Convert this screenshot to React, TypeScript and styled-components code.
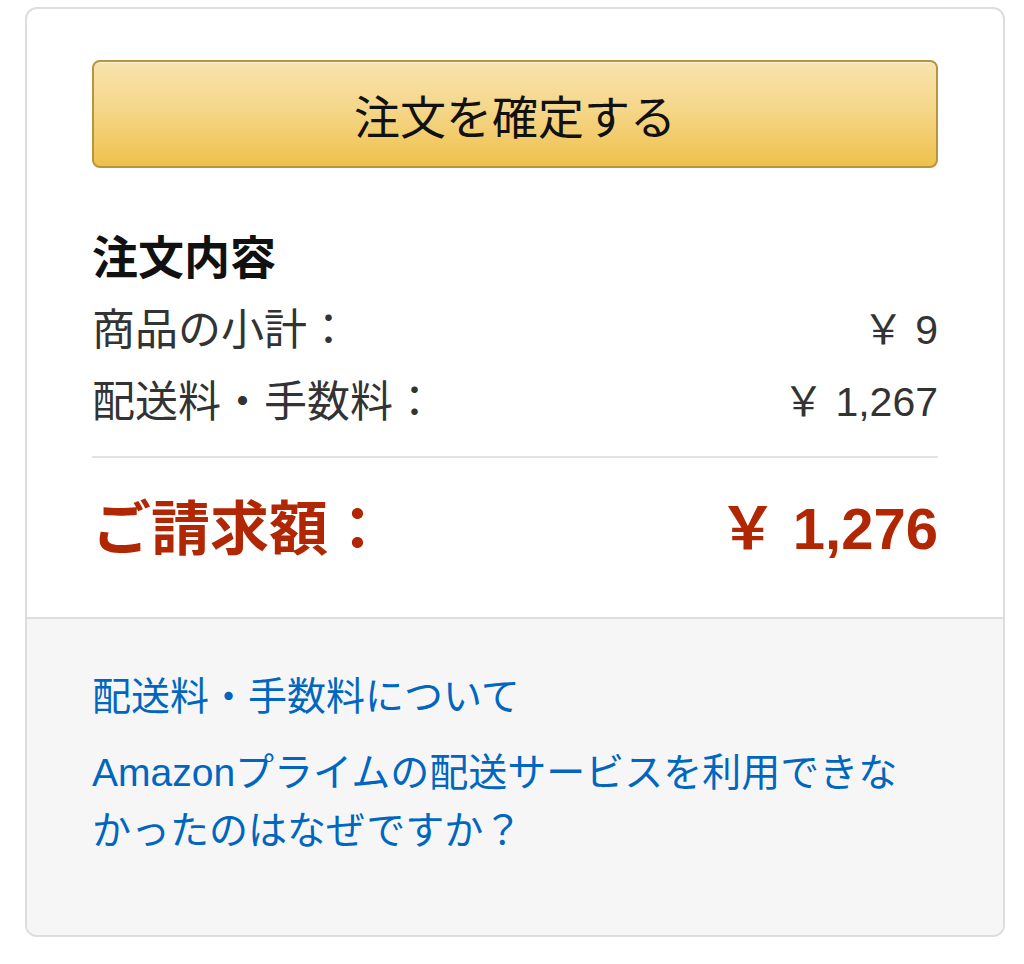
import React from "react";
import styled, { createGlobalStyle } from "styled-components";

const Global = createGlobalStyle`
  html, body { margin: 0; padding: 0; background: #ffffff; }
  body { font-family: "Liberation Sans", "Noto Sans CJK JP", sans-serif; }
`;

const Page = styled.div`
  padding: 7px 19px 0 25px;
`;

const Card = styled.div`
  width: 976px;
  border: 2px solid #dddddd;
  border-radius: 12px;
  overflow: hidden;
  background: #ffffff;
`;

const Summary = styled.div`
  padding: 51px 65px 53px 65px;
  display: flex;
  flex-direction: column;
`;

const PlaceOrder = styled.button`
  box-sizing: border-box;
  width: 100%;
  height: 108px;
  border: 2px solid #b7953f;
  border-radius: 8px;
  background: linear-gradient(to bottom, #f8e3ae 0%, #f5d78a 45%, #efc04c 100%);
  box-shadow: inset 0 1px 0 rgba(255, 255, 255, 0.5);
  font-family: "Noto Sans CJK JP", sans-serif;
  font-size: 46px;
  color: #111111;
  padding: 0;
  cursor: pointer;
`;

const Heading = styled.h2`
  margin: 56px 0 6px 0;
  font-family: "Noto Sans CJK JP", sans-serif;
  font-size: 46px;
  line-height: 60px;
  font-weight: 700;
  color: #111111;
`;

const Row = styled.div`
  display: flex;
  justify-content: space-between;
  align-items: center;
  height: 72px;
  color: #333333;
`;

const RowLabel = styled.span`
  font-family: "Noto Sans CJK JP", sans-serif;
  font-size: 43px;
`;

const RowValue = styled.span`
  font-family: "Liberation Sans", "Noto Sans CJK JP", sans-serif;
  font-size: 41px;
`;

const Divider = styled.hr`
  margin: 22px 0 0 0;
  border: none;
  height: 2px;
  background: #e3e3e3;
`;

const TotalRow = styled.div`
  display: flex;
  justify-content: space-between;
  align-items: center;
  height: 80px;
  margin-top: 26px;
  color: #b12704;
  font-weight: 700;
`;

const TotalLabel = styled.span`
  font-family: "Noto Sans CJK JP", sans-serif;
  font-size: 59px;
`;

const TotalValue = styled.span`
  font-family: "Liberation Sans", "Noto Sans CJK JP", sans-serif;
  font-size: 58px;
`;

const Footer = styled.div`
  border-top: 2px solid #dddddd;
  background: #f6f6f6;
  padding: 49px 80px 75px 65px;
  display: flex;
  flex-direction: column;
  gap: 18px;
`;

const HelpLink = styled.a`
  font-family: "Liberation Sans", "Noto Sans CJK JP", sans-serif;
  font-size: 39px;
  line-height: 58px;
  color: #0066c0;
  text-decoration: none;
`;

export default function App() {
  return (
    <>
      <Global />
      <Page>
        <Card>
          <Summary>
            <PlaceOrder>注文を確定する</PlaceOrder>
            <Heading>注文内容</Heading>
            <Row>
              <RowLabel>商品の小計：</RowLabel>
              <RowValue>￥ 9</RowValue>
            </Row>
            <Row>
              <RowLabel>配送料・手数料：</RowLabel>
              <RowValue>￥ 1,267</RowValue>
            </Row>
            <Divider />
            <TotalRow>
              <TotalLabel>ご請求額：</TotalLabel>
              <TotalValue>￥ 1,276</TotalValue>
            </TotalRow>
          </Summary>
          <Footer>
            <HelpLink href="#">配送料・手数料について</HelpLink>
            <HelpLink href="#">Amazonプライムの配送サービスを利用できなかったのはなぜですか？</HelpLink>
          </Footer>
        </Card>
      </Page>
    </>
  );
}
